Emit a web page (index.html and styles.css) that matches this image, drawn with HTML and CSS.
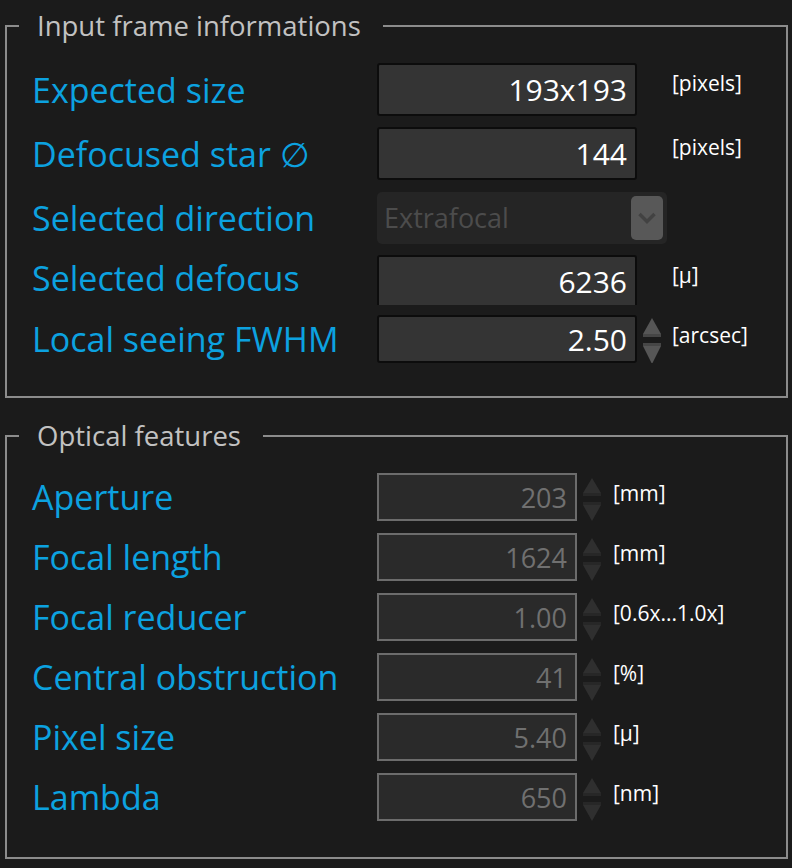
FILE: index.html
```html
<!DOCTYPE html>
<html lang="en">
<head>
    <meta charset="UTF-8">
    <meta name="viewport" content="width=device-width, initial-scale=1.0">
    <title>Frame settings</title>
    <link rel="stylesheet" href="styles.css">
</head>
<body>
    <fieldset class="group input-frame">
        <legend class="group-title">Input frame informations</legend>
        <div class="rows">
            <div class="row">
                <span class="label">Expected size</span>
                <div class="field">193x193</div>
                <span class="spin-slot"></span>
                <span class="unit">[pixels]</span>
            </div>
            <div class="row">
                <span class="label">Defocused star ∅</span>
                <div class="field">144</div>
                <span class="spin-slot"></span>
                <span class="unit">[pixels]</span>
            </div>
            <div class="row">
                <span class="label">Selected direction</span>
                <div class="combo">
                    <span class="combo-text">Extrafocal</span>
                    <span class="combo-button">
                        <svg width="20" height="14" viewBox="0 0 20 14"><path d="M2.5 3 L10 10.5 L17.5 3" fill="none" stroke="#424242" stroke-width="3.5"/></svg>
                    </span>
                </div>
                <span class="unit"></span>
            </div>
            <div class="row row-cut">
                <span class="label">Selected defocus</span>
                <div class="field field-cut">6236</div>
                <span class="spin-slot"></span>
                <span class="unit">[µ]</span>
            </div>
            <div class="row row-short">
                <span class="label">Local seeing FWHM</span>
                <div class="field">2.50</div>
                <span class="spin-slot">
                    <svg class="spinner" width="20" height="48" viewBox="0 0 20 48">
                        <polygon points="10,3 19,19 1,19" fill="#565656"/>
                        <rect x="1" y="19" width="18" height="3" fill="#464646"/>
                        <rect x="1" y="28" width="18" height="3" fill="#464646"/>
                        <polygon points="1,31 19,31 10,49" fill="#565656"/>
                    </svg>
                </span>
                <span class="unit">[arcsec]</span>
            </div>
        </div>
    </fieldset>

    <fieldset class="group optical">
        <legend class="group-title">Optical features</legend>
        <div class="rows">
            <div class="row">
                <span class="label">Aperture</span>
                <div class="field field-off">203</div>
                <span class="spin-slot"><svg class="spinner" width="20" height="48" viewBox="0 0 20 48"><polygon points="10,5 19,20 1,20" fill="#2f2f2f"/><rect x="1" y="20" width="18" height="3" fill="#272727"/><rect x="1" y="29" width="18" height="3" fill="#272727"/><polygon points="1,32 19,32 10,48" fill="#2f2f2f"/></svg></span>
                <span class="unit">[mm]</span>
            </div>
            <div class="row">
                <span class="label">Focal length</span>
                <div class="field field-off">1624</div>
                <span class="spin-slot"><svg class="spinner" width="20" height="48" viewBox="0 0 20 48"><polygon points="10,5 19,20 1,20" fill="#2f2f2f"/><rect x="1" y="20" width="18" height="3" fill="#272727"/><rect x="1" y="29" width="18" height="3" fill="#272727"/><polygon points="1,32 19,32 10,48" fill="#2f2f2f"/></svg></span>
                <span class="unit">[mm]</span>
            </div>
            <div class="row">
                <span class="label">Focal reducer</span>
                <div class="field field-off">1.00</div>
                <span class="spin-slot"><svg class="spinner" width="20" height="48" viewBox="0 0 20 48"><polygon points="10,5 19,20 1,20" fill="#2f2f2f"/><rect x="1" y="20" width="18" height="3" fill="#272727"/><rect x="1" y="29" width="18" height="3" fill="#272727"/><polygon points="1,32 19,32 10,48" fill="#2f2f2f"/></svg></span>
                <span class="unit">[0.6x...1.0x]</span>
            </div>
            <div class="row">
                <span class="label">Central obstruction</span>
                <div class="field field-off">41</div>
                <span class="spin-slot"><svg class="spinner" width="20" height="48" viewBox="0 0 20 48"><polygon points="10,5 19,20 1,20" fill="#2f2f2f"/><rect x="1" y="20" width="18" height="3" fill="#272727"/><rect x="1" y="29" width="18" height="3" fill="#272727"/><polygon points="1,32 19,32 10,48" fill="#2f2f2f"/></svg></span>
                <span class="unit">[%]</span>
            </div>
            <div class="row">
                <span class="label">Pixel size</span>
                <div class="field field-off">5.40</div>
                <span class="spin-slot"><svg class="spinner" width="20" height="48" viewBox="0 0 20 48"><polygon points="10,5 19,20 1,20" fill="#2f2f2f"/><rect x="1" y="20" width="18" height="3" fill="#272727"/><rect x="1" y="29" width="18" height="3" fill="#272727"/><polygon points="1,32 19,32 10,48" fill="#2f2f2f"/></svg></span>
                <span class="unit">[µ]</span>
            </div>
            <div class="row">
                <span class="label">Lambda</span>
                <div class="field field-off">650</div>
                <span class="spin-slot"><svg class="spinner" width="20" height="48" viewBox="0 0 20 48"><polygon points="10,5 19,20 1,20" fill="#2f2f2f"/><rect x="1" y="20" width="18" height="3" fill="#272727"/><rect x="1" y="29" width="18" height="3" fill="#272727"/><polygon points="1,32 19,32 10,48" fill="#2f2f2f"/></svg></span>
                <span class="unit">[nm]</span>
            </div>
        </div>
    </fieldset>
</body>
</html>
```

FILE: styles.css
```css
* {
    margin: 0;
    padding: 0;
    box-sizing: border-box;
    font-family: 'Open Sans', 'Noto Sans', sans-serif;
}

body {
    background: #1b1b1b;
    width: 792px;
    height: 868px;
    overflow: hidden;
}

.group {
    border: 2px solid #8c8c8c;
    margin: 7px 4px 0 5px;
    padding: 18px 0 33px 0;
    min-width: 0;
}

.group-title {
    margin-left: 12px;
    padding: 0 22px 0 18px;
    font-size: 27.5px;
    line-height: 38px;
    color: #c2c2c2;
}

.optical {
    margin-top: 19px;
    padding-bottom: 36px;
}

.rows {
    display: flex;
    flex-direction: column;
    gap: 11px;
    padding-left: 25px;
}

.optical .rows {
    gap: 12px;
}

.row {
    display: grid;
    grid-template-columns: 345px 260px 35px auto;
    align-items: center;
    height: 53px;
}

.optical .row {
    grid-template-columns: 345px 200px 36px auto;
    height: 48px;
}

.row-cut {
    height: 49px;
    align-items: start;
}

.row-short {
    height: 48px;
}

.label {
    color: #0ca2e0;
    font-size: 34px;
    white-space: nowrap;
}

.field {
    height: 100%;
    background: #343434;
    border: 2px solid #0c0c0c;
    border-radius: 3px;
    color: #fff;
    font-size: 30px;
    text-align: right;
    padding-right: 8px;
    display: flex;
    align-items: center;
    justify-content: flex-end;
}

.field-cut {
    height: 50px;
    border-bottom: none;
    border-radius: 3px 3px 0 0;
}

.field-off {
    background: #2a2a2a;
    border-color: #6c6c6c;
    border-radius: 0;
    color: #707070;
    font-size: 27px;
}

.combo {
    width: 290px;
    height: 52px;
    background: #252525;
    border-radius: 5px;
    display: flex;
    align-items: center;
    justify-content: space-between;
    padding: 0 4px 0 7px;
}

.combo-text {
    color: #4c4c4c;
    font-size: 27px;
}

.combo-button {
    width: 32px;
    height: 44px;
    background: #585858;
    border-radius: 5px;
    display: flex;
    align-items: center;
    justify-content: center;
}

.spin-slot {
    height: 100%;
    padding-left: 5px;
}

.spinner {
    display: block;
}

.unit {
    align-self: start;
    margin-top: 7px;
    color: #fff;
    font-size: 21px;
    line-height: 26px;
    white-space: nowrap;
}
```
